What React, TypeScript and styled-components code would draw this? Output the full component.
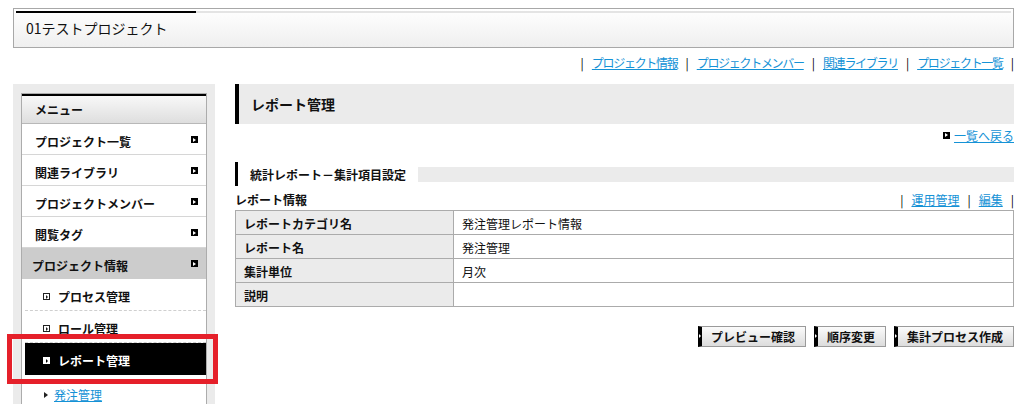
import React from 'react';
import styled, { createGlobalStyle } from 'styled-components';

const GlobalStyle = createGlobalStyle`
  html, body {
    margin: 0;
    padding: 0;
    background: #fff;
  }
  body {
    font-family: "Noto Sans CJK JP", "Noto Sans", sans-serif;
    font-size: 12px;
    color: #111;
  }
  * { box-sizing: border-box; }
`;

const Page = styled.div`
  width: 1024px;
  height: 404px;
  overflow: hidden;
  padding: 8px 10px 0 13px;
`;

const Header = styled.div`
  height: 40px;
  border: 1px solid #a8a8a8;
  background: linear-gradient(#ffffff, #efefef);
  padding: 2px 2px 0 2px;
`;

const HeaderStripe = styled.div`
  height: 2px;
  background: linear-gradient(to right, #000 0 180px, #e4e4e4 180px);
`;

const HeaderTitle = styled.div`
  font-size: 14px;
  line-height: 31px;
  padding-left: 10px;
`;

const TopLinks = styled.div`
  display: flex;
  justify-content: flex-end;
  align-items: center;
  height: 16px;
  margin-top: 6px;
  letter-spacing: -1.3px;
`;

const Sep = styled.span<{ $last?: boolean }>`
  margin: 0 ${p => (p.$last ? '0' : '8px')} 0 8px;
  color: #000;
  letter-spacing: 0;
`;

const Link = styled.a`
  color: #1592d6;
  text-decoration: underline;
  cursor: pointer;
`;

const Body = styled.div`
  display: flex;
  gap: 20px;
  margin-top: 14px;
`;

const Sidebar = styled.div`
  width: 202px;
  flex: none;
  background: #ebebeb;
  padding: 9px 8px 0 8px;
  height: 320px;
`;

const MenuBox = styled.div`
  border: 1px solid #acacac;
  border-bottom: none;
  background: #fff;
  height: 100%;
`;

const MenuHead = styled.div`
  border-top: 2px solid #000;
  height: 30px;
  line-height: 28px;
  padding-left: 13px;
  font-weight: bold;
  background: linear-gradient(#f8f8f8, #dedede);
  border-bottom: 1px solid #b8b8b8;
`;

const MenuItem = styled.div<{ $current?: boolean }>`
  display: flex;
  align-items: center;
  justify-content: space-between;
  height: 31px;
  padding: 5px 8px 0 ${p => (p.$current ? '10px' : '13px')};
  font-weight: bold;
  background: ${p => (p.$current ? '#cccccc' : '#fff')};
  border-bottom: 1px solid ${p => (p.$current ? '#cccccc' : '#d6d6d6')};
`;

const Arrow = styled.span<{ $invert?: boolean }>`
  position: relative;
  width: 7px;
  height: 7px;
  margin-top: -4px;
  background: ${p => (p.$invert ? '#fff' : '#000')};
  &::after {
    content: '';
    position: absolute;
    left: 2px;
    top: 1.5px;
    border-left: 3px solid ${p => (p.$invert ? '#000' : '#fff')};
    border-top: 2px solid transparent;
    border-bottom: 2px solid transparent;
  }
`;

const SubList = styled.div`
  padding-left: 3px;
`;

const SubItem = styled.div<{ $active?: boolean }>`
  display: flex;
  align-items: center;
  gap: 8px;
  height: 32px;
  padding: 4px 0 0 18px;
  font-weight: bold;
  background: ${p => (p.$active ? '#000' : '#fff')};
  color: ${p => (p.$active ? '#fff' : '#111')};
  border-bottom: 1px dashed ${p => (p.$active ? '#000' : '#cfcfcf')};
`;

const BoxIcon = styled.span<{ $active?: boolean }>`
  position: relative;
  width: 7px;
  height: 7px;
  border: 1px solid ${p => (p.$active ? '#fff' : '#222')};
  background: ${p => (p.$active ? '#fff' : 'transparent')};
  &::after {
    content: '';
    position: absolute;
    left: 1.5px;
    top: 0.5px;
    border-left: 2px solid ${p => (p.$active ? '#000' : '#222')};
    border-top: 2px solid transparent;
    border-bottom: 2px solid transparent;
  }
`;

const Highlight = styled.div`
  position: relative;
  &::before {
    content: '';
    position: absolute;
    left: -18px;
    right: -12px;
    top: -9px;
    bottom: -9px;
    border: 5px solid #e5202a;
    pointer-events: none;
    z-index: 1;
  }
`;

const LeafItem = styled.div`
  display: flex;
  align-items: center;
  gap: 6px;
  height: 32px;
  padding: 7px 0 0 19px;
`;

const Tri = styled.span`
  width: 0;
  height: 0;
  border-left: 4px solid #222;
  border-top: 3px solid transparent;
  border-bottom: 3px solid transparent;
`;

const Main = styled.div`
  flex: 1;
  width: 778px;
`;

const PageTitle = styled.div`
  height: 40px;
  background: #ebebeb;
  border-left: 4px solid #000;
  padding-left: 12px;
  line-height: 40px;
  font-size: 14px;
  font-weight: bold;
`;

const BackRow = styled.div`
  display: flex;
  justify-content: flex-end;
  align-items: center;
  gap: 4px;
  height: 20px;
  margin-top: 1px;
  ${Arrow} {
    margin-top: 0;
  }
`;

const SectionHead = styled.div`
  display: flex;
  align-items: center;
  height: 24px;
  margin-top: 17px;
  border-left: 3px solid #000;
`;

const SectionText = styled.span`
  padding: 0 12px;
  font-weight: bold;
  background: #fff;
`;

const SectionFill = styled.div`
  flex: 1;
  height: 15px;
  background: #ebebeb;
`;

const InfoRow = styled.div`
  display: flex;
  justify-content: space-between;
  align-items: center;
  height: 20px;
  margin-top: 3px;
`;

const InfoTitle = styled.span`
  font-weight: bold;
`;

const InfoLinks = styled.div`
  display: flex;
  align-items: center;
`;

const Table = styled.table`
  width: 100%;
  border-collapse: collapse;
  margin-top: 1px;
  td {
    border: 1px solid #ababab;
    height: 24px;
    padding: 1px 10px 0 8px;
  }
`;

const LabelCell = styled.td`
  width: 218px;
  background: #ebebeb;
  font-weight: bold;
`;

const Buttons = styled.div`
  display: flex;
  justify-content: flex-end;
  gap: 8px;
  margin-top: 19px;
`;

const Button = styled.button`
  position: relative;
  height: 21px;
  border: 1px solid #9a9a9a;
  border-left: 4px solid #000;
  background: linear-gradient(#fbfbfb, #dcdcdc);
  font-family: inherit;
  font-size: 12px;
  font-weight: bold;
  color: #111;
  padding: 0 10px 0 9px;
  cursor: pointer;
  &::before {
    content: '';
    position: absolute;
    left: -3px;
    top: 7px;
    border-left: 2px solid #fff;
    border-top: 2px solid transparent;
    border-bottom: 2px solid transparent;
  }
`;

const topLinks = ['プロジェクト情報', 'プロジェクトメンバー', '関連ライブラリ', 'プロジェクト一覧'];
const menu = ['プロジェクト一覧', '関連ライブラリ', 'プロジェクトメンバー', '閲覧タグ'];
const rows: [string, string][] = [
  ['レポートカテゴリ名', '発注管理レポート情報'],
  ['レポート名', '発注管理'],
  ['集計単位', '月次'],
  ['説明', ''],
];

export default function App() {
  return (
    <>
      <GlobalStyle />
      <Page>
        <Header>
          <HeaderStripe />
          <HeaderTitle>01テストプロジェクト</HeaderTitle>
        </Header>

        <TopLinks>
          {topLinks.map(t => (
            <React.Fragment key={t}>
              <Sep>|</Sep>
              <Link>{t}</Link>
            </React.Fragment>
          ))}
          <Sep $last>|</Sep>
        </TopLinks>

        <Body>
          <Sidebar>
            <MenuBox>
              <MenuHead>メニュー</MenuHead>
              {menu.map(m => (
                <MenuItem key={m}>
                  {m}
                  <Arrow />
                </MenuItem>
              ))}
              <MenuItem $current>
                プロジェクト情報
                <Arrow />
              </MenuItem>
              <SubList>
                <SubItem>
                  <BoxIcon />
                  プロセス管理
                </SubItem>
                <SubItem>
                  <BoxIcon />
                  ロール管理
                </SubItem>
                <Highlight>
                  <SubItem $active>
                    <BoxIcon $active />
                    レポート管理
                  </SubItem>
                </Highlight>
                <LeafItem>
                  <Tri />
                  <Link>発注管理</Link>
                </LeafItem>
              </SubList>
            </MenuBox>
          </Sidebar>

          <Main>
            <PageTitle>レポート管理</PageTitle>
            <BackRow>
              <Arrow />
              <Link>一覧へ戻る</Link>
            </BackRow>

            <SectionHead>
              <SectionText>統計レポート－集計項目設定</SectionText>
              <SectionFill />
            </SectionHead>

            <InfoRow>
              <InfoTitle>レポート情報</InfoTitle>
              <InfoLinks>
                <Sep>|</Sep>
                <Link>運用管理</Link>
                <Sep>|</Sep>
                <Link>編集</Link>
                <Sep $last>|</Sep>
              </InfoLinks>
            </InfoRow>

            <Table>
              <tbody>
                {rows.map(([k, v]) => (
                  <tr key={k}>
                    <LabelCell>{k}</LabelCell>
                    <td>{v}</td>
                  </tr>
                ))}
              </tbody>
            </Table>

            <Buttons>
              <Button>プレビュー確認</Button>
              <Button>順序変更</Button>
              <Button>集計プロセス作成</Button>
            </Buttons>
          </Main>
        </Body>
      </Page>
    </>
  );
}
